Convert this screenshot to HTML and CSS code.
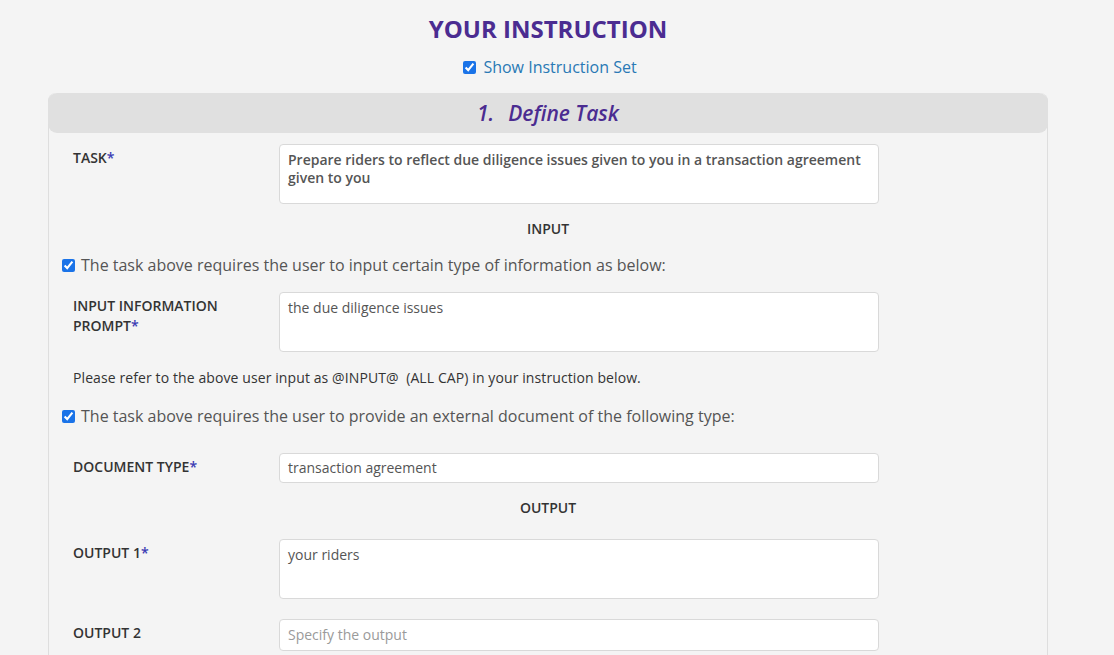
FILE: index.html
```html
<!DOCTYPE html>
<html>
<head>
<meta charset="utf-8">
<link rel="stylesheet" href="styles.css">
</head>
<body>
<div class="page">
  <h1 class="title">YOUR INSTRUCTION</h1>
  <label class="show-toggle"><input type="checkbox" checked> Show Instruction Set</label>
  <section class="panel">
    <div class="panel-head"><span class="num">1.</span>Define Task</div>
    <div class="panel-body">
      <div class="row row-task">
        <div class="label">TASK<span class="req">*</span></div>
        <div class="field area area-bold">Prepare riders to reflect due diligence issues given to you in a transaction agreement given to you</div>
      </div>
      <div class="section-title st-input">INPUT</div>
      <label class="check-line cl-1"><input type="checkbox" checked> The task above requires the user to input certain type of information as below:</label>
      <div class="row row-prompt">
        <div class="label">INPUT INFORMATION PROMPT<span class="req">*</span></div>
        <div class="field area">the due diligence issues</div>
      </div>
      <p class="note">Please refer to the above user input as @INPUT@&nbsp; (ALL CAP) in your instruction below.</p>
      <label class="check-line cl-2"><input type="checkbox" checked> The task above requires the user to provide an external document of the following type:</label>
      <div class="row row-doc">
        <div class="label">DOCUMENT TYPE<span class="req">*</span></div>
        <div class="field line">transaction agreement</div>
      </div>
      <div class="section-title st-output">OUTPUT</div>
      <div class="row row-out1">
        <div class="label">OUTPUT 1<span class="req">*</span></div>
        <div class="field area">your riders</div>
      </div>
      <div class="row row-out2">
        <div class="label">OUTPUT 2</div>
        <div class="field line placeholder">Specify the output</div>
      </div>
    </div>
  </section>
</div>
</body>
</html>
```
FILE: styles.css
```css
html, body {
  margin: 0;
  padding: 0;
  background: #f4f4f4;
  font-family: "Open Sans", "Noto Sans", sans-serif;
  color: #333;
  overflow: hidden;
}
.page {
  width: 1000px;
  margin-left: 48px;
}
.title {
  margin: 0;
  padding-top: 12px;
  text-align: center;
  font-size: 24px;
  line-height: 34px;
  font-weight: 700;
  color: #4b2c91;
}
.show-toggle {
  display: flex;
  justify-content: center;
  align-items: center;
  gap: 7px;
  margin-top: 9px;
  height: 24px;
  font-size: 16px;
  color: #2979b5;
  padding-left: 4px;
}
.show-toggle input, .check-line input {
  margin: 0;
  width: 13px;
  height: 13px;
  accent-color: #1a73e8;
}
.panel {
  margin-top: 14px;
  border: 1px solid #dedede;
  border-top: none;
  border-radius: 8px 8px 0 0;
  height: 600px;
}
.panel-head {
  height: 40px;
  background: #e0e0e0;
  border-radius: 9px;
  margin: 0 -1px;
  display: flex;
  align-items: center;
  justify-content: center;
  font-size: 21px;
  font-style: italic;
  font-weight: 600;
  color: #4b2c91;
}
.num { margin-right: 14px; }
.panel-body {
  padding: 11px 24px 0 24px;
}
.row {
  display: flex;
}
.label {
  width: 206px;
  flex: none;
  font-size: 14px;
  line-height: 20px;
  font-weight: 600;
  color: #333;
  padding-top: 4px;
  box-sizing: border-box;
  padding-right: 30px;
}
.req { color: #3b3bb3; }
.field {
  width: 600px;
  box-sizing: border-box;
  background: #fff;
  border: 1px solid #d9d9d9;
  border-radius: 4px;
  font-size: 14px;
  color: #555;
  padding: 6px 8px;
  line-height: 18px;
}
.area { height: 60px; }
.area-bold { font-weight: 600; }
.line { height: 30px; padding-top: 5px; }
.placeholder { color: #9a9a9a; }
.section-title {
  text-align: center;
  font-size: 14px;
  line-height: 20px;
  font-weight: 600;
  color: #333;
}
.st-input { margin-top: 15px; }
.check-line {
  display: flex;
  align-items: center;
  gap: 6px;
  margin-left: -11px;
  height: 24px;
  font-size: 16px;
  color: #555;
}
.cl-1 { margin-top: 14px; }
.row-prompt { margin-top: 15px; }
.note {
  margin: 16px 0 0 0;
  font-size: 14px;
  line-height: 20px;
  color: #333;
  letter-spacing: 0.1px;
}
.cl-2 { margin-top: 16px; }
.row-doc { margin-top: 25px; }
.st-output { margin-top: 15px; }
.row-out1 { margin-top: 21px; }
.row-out2 { margin-top: 20px; }
.row-out2 .field { height: 32px; padding-top: 6px; }
```
